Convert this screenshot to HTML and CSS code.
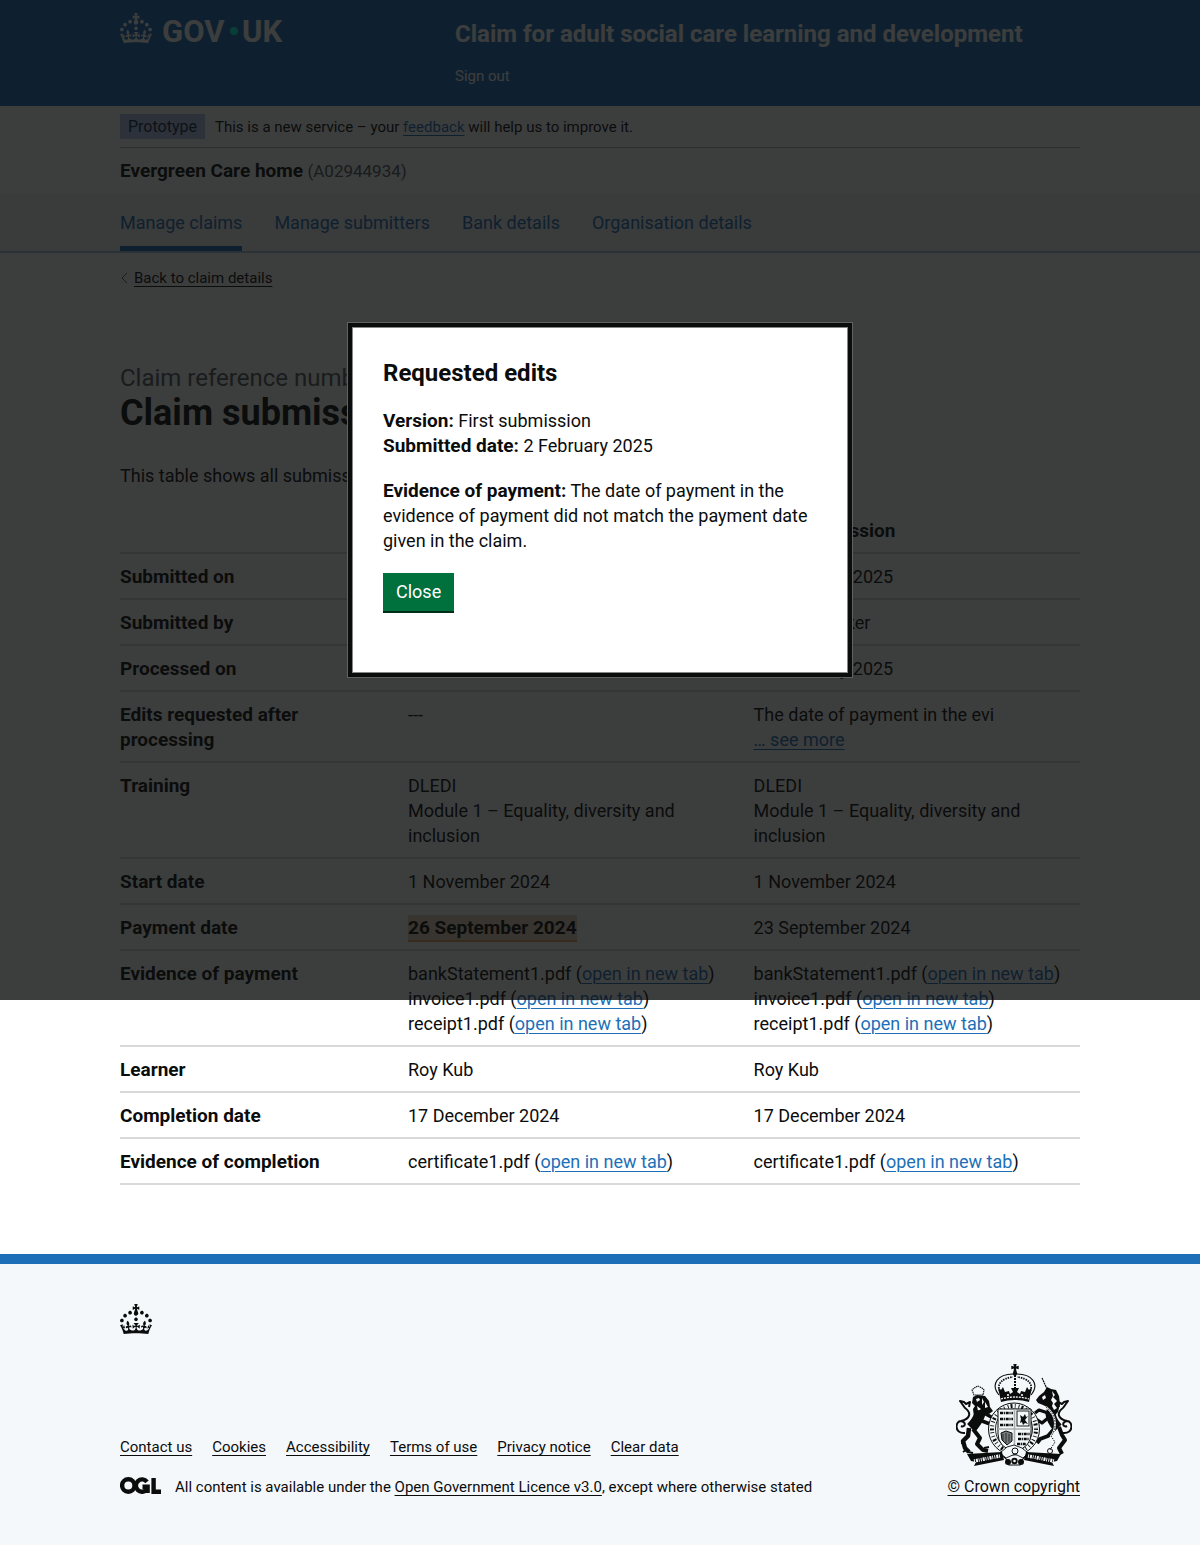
FILE: index.html
```html
<!DOCTYPE html>
<html lang="en">
<head>
<meta charset="utf-8">
<meta name="viewport" content="width=device-width, initial-scale=1">
<title>Claim submissions – Claim for adult social care learning and development</title>
<link rel="stylesheet" href="styles.css">
</head>
<body>
<svg class="sprite" aria-hidden="true">
  <symbol id="crown" viewBox="0 0 32 30">
    <path d="M22.6 10.4c-1 .4-2-.1-2.4-1-.4-.9.1-2 1-2.4.9-.4 2 .1 2.4 1s-.1 2-1 2.4m-5.9 6.7c-.9.4-2-.1-2.4-1-.4-.9.1-2 1-2.4.9-.4 2 .1 2.4 1s-.1 2-1 2.4m10.8-3.7c-1 .4-2-.1-2.4-1-.4-.9.1-2 1-2.4.9-.4 2 .1 2.4 1s0 2-1 2.4m3.3 4.8c-1 .4-2-.1-2.4-1-.4-.9.1-2 1-2.4.9-.4 2 .1 2.4 1s-.1 2-1 2.4M17 4.7l2.3 1.2V2.5l-2.3.7-.2-.2.9-3h-3.4l.9 3-.2.2c-.1.1-2.3-.7-2.3-.7v3.4L15 4.7c.1.1.1.2.2.2l-1.3 4c-.1.2-.1.4-.1.6 0 1.1.8 2 1.9 2.2h.7c1-.2 1.9-1.1 1.9-2.1 0-.2 0-.4-.1-.6l-1.3-4c-.1-.2 0-.2.1-.3m-7.6 5.7c.9.4 2-.1 2.4-1 .4-.9-.1-2-1-2.4-.9-.4-2 .1-2.4 1s0 2 1 2.4m-5 3c.9.4 2-.1 2.4-1 .4-.9-.1-2-1-2.4-.9-.4-2 .1-2.4 1s.1 2 1 2.4m-3.2 4.8c.9.4 2-.1 2.4-1 .4-.9-.1-2-1-2.4-.9-.4-2 .1-2.4 1s0 2 1 2.4m14.8 11c4.4 0 8.6.3 12.3.8 1.1-4.5 2.4-7 3.7-8.8l-2.500-.9c.2 1.300.3 1.900 0 2.700-.4-.4-.8-1.100-1.100-2.300l-1.200 4c.7-.5 1.300-.8 2-.9-1.100 2.500-2.600 3.100-3.500 3-1.100-.2-1.700-1.200-1.500-2.100.3-1.200 1.500-1.500 2.100-.1 1.100-2.300-.8-3-2-2.300 1.900-1.900 2.100-3.500.6-5.600-2.100 1.600-2.100 3.200-1.200 5.500-1.200-1.400-3.200-.6-2.500 1.600.9-1.400 2.100-.5 1.900.8-.2 1.100-1.700 2.100-3.500 1.900-2.700-.2-2.900-2.100-2.900-3.600.7-.1 1.900.5 2.900 1.900l.4-4.300c-1.100 1.100-2.100 1.400-3.200 1.400.4-1.200 2.100-3 2.100-3h-5.400s1.700 1.900 2.100 3c-1.100 0-2.100-.2-3.200-1.400l.4 4.300c1-1.400 2.200-2 2.900-1.900-.1 1.500-.2 3.400-2.900 3.600-1.900.2-3.400-.8-3.500-1.900-.2-1.300 1-2.200 1.900-.8.7-2.300-1.200-3-2.500-1.600.9-2.200.9-3.900-1.200-5.500-1.500 2-1.300 3.700.6 5.600-1.200-.7-3.100 0-2 2.300.6-1.400 1.800-1.100 2.100.1.2.9-.3 1.900-1.500 2.100-.9.2-2.400-.5-3.500-3 .6 0 1.200.3 2 .9l-1.200-4c-.3 1.100-.7 1.900-1.100 2.300-.3-.8-.2-1.400 0-2.700l-2.900.9C1.300 23 2.600 25.500 3.700 30c3.700-.5 7.900-.8 12.300-.8"/>
  </symbol>
</svg>

<header class="header">
  <div class="container header-inner">
    <a class="logo" href="#" aria-label="GOV.UK">
      <svg width="168" height="40" viewBox="0 0 168 40" fill="currentColor" aria-hidden="true">
        <use href="#crown" width="32" height="30"/>
        <text class="logo-text" x="42" y="29">GOV</text>
        <circle class="logo-dot" cx="114" cy="18" r="4"/>
        <text class="logo-text" x="122" y="29">UK</text>
      </svg>
    </a>
    <div class="header-content">
      <a class="service-name" href="#">Claim for adult social care learning and development</a>
      <a class="sign-out" href="#">Sign out</a>
    </div>
  </div>
</header>

<div class="container">
  <div class="phase">
    <strong class="tag">Prototype</strong>
    <span>This is a new service – your <a href="#">feedback</a> will help us to improve it.</span>
  </div>
  <div class="organisation"><strong>Evergreen Care home</strong> <span>(A02944934)</span></div>
</div>

<nav class="service-nav" aria-label="Service">
  <ul class="container">
    <li><a class="active" href="#" aria-current="page">Manage claims</a></li>
    <li><a href="#">Manage submitters</a></li>
    <li><a href="#">Bank details</a></li>
    <li><a href="#">Organisation details</a></li>
  </ul>
</nav>

<div class="container">
  <a class="back" href="#"><svg width="14" height="12" viewBox="0 0 14 12" aria-hidden="true"><path d="M7 1 2 6l5 5" fill="none" stroke="#505a5f" stroke-width="1"/></svg><span>Back to claim details</span></a>
  <main>
    <h1><span class="caption">Claim reference number: VFK-TS1P-A</span>Claim submissions</h1>
    <p>This table shows all submissions of this claim.</p>
    <table>
      <thead>
        <tr><td></td><th scope="col">Second submission</th><th scope="col">First submission</th></tr>
      </thead>
      <tbody>
        <tr><th scope="row">Submitted on</th><td>20 February 2025</td><td>12 February 2025</td></tr>
        <tr><th scope="row">Submitted by</th><td>Simone Parker</td><td>Simone Parker</td></tr>
        <tr><th scope="row">Processed on</th><td>---</td><td>18 February 2025</td></tr>
        <tr><th scope="row">Edits requested after processing</th><td>---</td><td>The date of payment in the evi<br><a href="#">… see more</a></td></tr>
        <tr><th scope="row">Training</th><td>DLEDI<br>Module 1 – Equality, diversity and inclusion</td><td>DLEDI<br>Module 1 – Equality, diversity and inclusion</td></tr>
        <tr><th scope="row">Start date</th><td>1 November 2024</td><td>1 November 2024</td></tr>
        <tr><th scope="row">Payment date</th><td><strong class="changed">26 September 2024</strong></td><td>23 September 2024</td></tr>
        <tr><th scope="row">Evidence of payment</th>
          <td>bankStatement1.pdf (<a href="#">open in new tab</a>)<br>invoice1.pdf (<a href="#">open in new tab</a>)<br>receipt1.pdf (<a href="#">open in new tab</a>)</td>
          <td>bankStatement1.pdf (<a href="#">open in new tab</a>)<br>invoice1.pdf (<a href="#">open in new tab</a>)<br>receipt1.pdf (<a href="#">open in new tab</a>)</td></tr>
        <tr><th scope="row">Learner</th><td>Roy Kub</td><td>Roy Kub</td></tr>
        <tr><th scope="row">Completion date</th><td>17 December 2024</td><td>17 December 2024</td></tr>
        <tr><th scope="row">Evidence of completion</th><td>certificate1.pdf (<a href="#">open in new tab</a>)</td><td>certificate1.pdf (<a href="#">open in new tab</a>)</td></tr>
      </tbody>
    </table>
  </main>
</div>

<footer class="footer">
  <div class="container">
    <svg class="footer-crown" width="32" height="30" fill="#0b0c0c" aria-hidden="true"><use href="#crown"/></svg>
    <div class="footer-meta">
      <div class="footer-text">
        <ul>
          <li><a href="#">Contact us</a></li>
          <li><a href="#">Cookies</a></li>
          <li><a href="#">Accessibility</a></li>
          <li><a href="#">Terms of use</a></li>
          <li><a href="#">Privacy notice</a></li>
          <li><a href="#">Clear data</a></li>
        </ul>
        <div class="licence">
          <svg width="41" height="17" viewBox="0 0 41 17" role="img" aria-label="Open Government Licence" fill="none" stroke="#0b0c0c" stroke-width="4.4">
            <circle cx="8.3" cy="8.5" r="6.2"/>
            <path d="M27 4.8A6.2 6.2 0 1 0 27 12.4M22.5 9.8H27.6V16"/>
            <path d="M33.6 1V14.7H41"/>
          </svg>
          <span>All content is available under the <a href="#">Open Government Licence v3.0</a>, except where otherwise stated</span>
        </div>
      </div>
      <a class="crest" href="#">
        <svg width="116" height="102" viewBox="0 0 116 102" aria-hidden="true" fill="#0b0c0c" stroke="#0b0c0c" stroke-width="0">
          <!-- royal crown -->
          <path d="M57.3 0h3.4l-.7 2.600 2.700-.8v3.400l-2.700-.8.6 3.600h-3.200l.6-3.600-2.700.8V1.800l2.700.8z"/>
          <circle cx="59" cy="9.500" r="2.200"/>
          <g fill="none" stroke-width="1.100">
            <path d="M43 31C34 20 42 10 57 10M75 31c9-11 1-21-14-21"/>
            <path stroke-dasharray="1.500 1" stroke-width="1.800" d="M45 29c-6-8 1-15 12-16M73 29c6-8-1-15-12-16"/>
            <path stroke-dasharray="2 1" stroke-width="2" d="M59 11v13"/>
          </g>
          <path d="M42 23l3 3 2-3 2 5 4-1 1 3 3-2-2-4h8l-2 4 3 2 1-3 4 1 2-5 2 3 3-3-3 15q-15-4-28 0z"/>
          <path d="M45 35q14-4 28 0" fill="none" stroke="#f4f8fb" stroke-width="1.300" stroke-dasharray="2 1"/>
          <circle cx="52" cy="31" r="1.100" fill="#f4f8fb"/><circle cx="66" cy="31" r="1.100" fill="#f4f8fb"/>
          <!-- lion supporter -->
          <path d="M18 31l-2-5 2-2 4-2 4 2 2 2-1 5z" fill="none" stroke-width="1.100" stroke-dasharray="1.500 .6"/>
          <path d="M17 33l4-2 8 1 4 5 1 6 3 4-4 3-5-1-5 6-5-2-1-8 2-3-3-3z"/>
          <path d="M20 35l3-1 1 2-3 2zM26 34l2 4-2 3M29 38l3 5-3 1M21 42l4 3-3 2z" fill="#f4f8fb"/>
          <g fill="none" stroke-linejoin="round">
            <path d="M25 47q-3 10-10 17" stroke-width="11"/>
            <path d="M28 49l9 5 3-2M26 57l8 3 4-1" stroke-width="3.500"/>
            <path d="M13 64l-1 8-5 5 2 7 4 4" stroke-width="4.500"/>
            <path d="M17 65l7 9-3 6 6 6 5 1" stroke-width="4"/>
            <path d="M8 79H5M10 86l-3 2M28 84l5-1M12 88l5 1" stroke-width="1.800"/>
            <path d="M9 69C-2 70-1 57 5 57c6 1 4 7 0 5M5 57c9-2 11-8 4-13M9 44l-5-7 4 1 2 2 4-2-1 5" stroke-width="2"/>
          </g>
          <!-- unicorn supporter -->
          <path d="M86 14l5 11" fill="none" stroke-width="1.200" stroke-dasharray="2 .6"/>
          <path d="M82 39l-2-3 3-4 5-4 3-5 4 2 5 1 3 6 1 8-2 8-5 5-7-2 1-8-4-2z"/>
          <path d="M86 33l3-2 1 3-3 2zM96 27l3 4-2 2 4 4-3 3 3 4-3 2-2-4 1-3-2-3 2-4z" fill="#f4f8fb"/>
          <g fill="none" stroke-linejoin="round">
            <path d="M94 47q1 10 8 17" stroke-width="10"/>
            <path d="M92 49l-9-3-4 3M92 54l-6 5-6-4" stroke-width="3.200"/>
            <path d="M103 63l3 8 3 5-6 8 3 6" stroke-width="4"/>
            <path d="M99 64l-7 8-8 3-3 4" stroke-width="4"/>
            <path d="M90 43q9 7 9 16t-4 13l4 6-5 8" stroke="#f4f8fb" stroke-width="2"/>
            <path d="M90 43q9 7 9 16t-4 13l4 6-5 8" stroke-width="1" stroke-dasharray="1.500 1.200"/>
            <circle cx="94" cy="87" r="2.500" stroke-width="1"/>
            <path d="M107 69c11 1 10-12 4-12-6 1-4 7 0 5M111 57c-9-2-11-8-4-13M107 44l5-7-4 1-2 2-4-2 1 5" stroke-width="2"/>
          </g>
          <!-- garter and shield -->
          <ellipse cx="58" cy="65" rx="25.500" ry="26" fill="#f4f8fb" stroke-width="1"/>
          <ellipse cx="58" cy="65" rx="18.500" ry="20" fill="#f4f8fb" stroke-width=".9"/>
          <ellipse cx="58" cy="65" rx="22" ry="23" fill="none" stroke-width="4" stroke-dasharray=".9 1.900 2 2.400 .8 3"/>
          <path d="M42 45h33v25q0 13-16.500 18Q42 83 42 70z" fill="#f4f8fb" stroke-width="1"/>
          <path d="M58.500 45v43M42 65h33" fill="none" stroke="#a9adae" stroke-width="1.600"/>
          <g fill="none" stroke-width="2.400" stroke-dasharray="3 .7 1.200 .8">
            <path d="M44 49h13M44 55h13M44 61h13M62 70h12M62 75h11M61 80h9"/>
          </g>
          <rect x="61" y="47" width="12" height="15" fill="none" stroke-width=".9"/>
          <path d="M64 51l3 2 2-3 1 3 2-1-3 4 3 4-3-1-2 2-1-3-2 1 1-4z"/>
          <path d="M45 69l5-2 6 2v8l-5 4-5-5z" fill="#777b7c" stroke-width="1"/>
          <path d="M47 70v7M50 69v10M53 70v8" fill="none" stroke-width=".7"/>
          <path d="M51 83l7-2 8 3 6 5-5 5-8-4-9 4-6-5z" fill="#f4f8fb" stroke-width=".9"/>
          <circle cx="59" cy="87" r="3" fill="none" stroke-width="1"/>
          <!-- motto scroll -->
          <path d="M11 90l35-2 2 8-30 6 2-4-5-1zM105 90l-35-2-2 8 30 6-2-4 5-1z"/>
          <path d="M18 97l26-5M72 92l26 5" fill="none" stroke="#f4f8fb" stroke-width="3.500" stroke-dasharray="1 1 2 .8 .9 1.200"/>
          <path d="M46 92q5 2 7 9h11q2-7 7-9" fill="none" stroke-width="1.100"/>
          <circle cx="52" cy="98" r="3"/><circle cx="65" cy="98" r="3"/><circle cx="58.500" cy="97" r="3.200"/>
          <circle cx="58.500" cy="97" r="1.300" fill="#f4f8fb"/>
        </svg>
        <span>© Crown copyright</span>
      </a>
    </div>
  </div>
</footer>

<div class="overlay">
  <dialog open aria-labelledby="edits-title">
    <h2 id="edits-title">Requested edits</h2>
    <p><strong>Version:</strong> First submission<br><strong>Submitted date:</strong> 2 February 2025</p>
    <p><strong>Evidence of payment:</strong> The date of payment in the evidence of payment did not match the payment date given in the claim.</p>
    <button type="button">Close</button>
  </dialog>
</div>
</body>
</html>
```
FILE: styles.css
```css
* {
  box-sizing: border-box;
}

body {
  position: relative;
  margin: 0;
  background: #fff;
  color: #0b0c0c;
  font-family: Roboto, "Liberation Sans", sans-serif;
  font-size: 18px;
  line-height: 25px;
}

a {
  color: #1d70b8;
  text-decoration-thickness: 1px;
  text-underline-offset: 3px;
}

strong,
th {
  font-size: 19px;
  font-weight: 700;
}

ul {
  margin: 0;
  padding: 0;
  list-style: none;
}

.sprite {
  display: none;
}

.container {
  max-width: 960px;
  margin: 0 auto;
}

/* Header */

.header {
  background: #1d70b8;
  color: #fff;
}

.header a {
  color: #fff;
  text-decoration: none;
}

.header-inner {
  display: grid;
  grid-template-columns: 335px 1fr;
  padding: 13px 0 20px;
}

.logo svg {
  display: block;
}

.logo-text {
  font-size: 31px;
  font-weight: 700;
}

.logo-dot {
  fill: #00ffe0;
}

.header-content {
  display: flex;
  flex-direction: column;
  align-items: flex-start;
  gap: 17px;
  padding-top: 6px;
}

.service-name {
  font-size: 24px;
  font-weight: 700;
  line-height: 30px;
}

.sign-out {
  font-size: 15px;
  line-height: 20px;
}

/* Phase banner */

.phase {
  display: flex;
  align-items: baseline;
  gap: 10px;
  padding: 8px 0 7px;
  border-bottom: 1px solid #b1b4b6;
  font-size: 15px;
}

.tag {
  padding: 0 8px;
  background: #bbd4ea;
  color: #0c2d4a;
  font-size: 16px;
  font-weight: 400;
}

.phase .tag {
  background: #b4c3ea;
}

.organisation {
  padding: 10px 0;
}

.organisation span {
  color: #505a5f;
  font-size: 17px;
}

/* Service navigation */

.service-nav {
  border-bottom: 2px solid #a5c6e3;
  background: #f4f4f4;
}

.service-nav ul {
  display: flex;
  gap: 32px;
}

.service-nav a {
  display: block;
  padding: 16px 0 11px;
  border-bottom: 5px solid transparent;
  text-decoration: none;
}

.service-nav .active {
  border-color: #1d70b8;
}

/* Main content */

.back {
  display: inline-flex;
  align-items: center;
  margin-top: 15px;
  color: #0b0c0c;
  font-size: 15px;
  line-height: 20px;
  text-decoration: none;
}

.back span {
  text-decoration: underline 1px;
  text-underline-offset: 3px;
}

main {
  padding: 73px 0 69px;
}

h1 {
  margin: 0 0 30px;
  font-size: 36px;
  line-height: 40px;
}

.caption {
  display: block;
  color: #505a5f;
  font-size: 24px;
  font-weight: 400;
  line-height: 30px;
}

p {
  margin: 0 0 20px;
}

table {
  width: 100%;
  border-collapse: separate;
  border-spacing: 0;
  table-layout: fixed;
}

th,
td {
  padding: 10px 20px 9px 0;
  border-bottom: 2px solid #d8d9da;
  text-align: left;
  vertical-align: top;
}

thead td {
  width: 30%;
}

thead th {
  width: 36%;
}

thead th:last-child {
  width: 34%;
}

td:last-child {
  padding-right: 0;
}

.changed {
  padding: 1px 0;
  border-bottom: 2px solid #f0a35a;
  background: #eccfb8;
}

/* Footer */

.footer {
  padding: 40px 0 49px;
  border-top: 10px solid #1d70b8;
  background: #f4f8fb;
  font-size: 15px;
  line-height: 20px;
}

.footer a {
  color: #0b0c0c;
}

.footer-crown {
  display: block;
  margin-bottom: 30px;
}

.footer-meta {
  display: flex;
  align-items: flex-end;
  justify-content: space-between;
}

.footer-text {
  display: flex;
  flex-direction: column;
  gap: 20px;
}

.footer-text ul {
  display: flex;
  gap: 20px;
}

.licence {
  display: flex;
  gap: 14px;
}

.footer .crest {
  display: flex;
  flex-direction: column;
  align-items: center;
  gap: 11px;
  font-size: 16px;
}

/* Modal */

.overlay {
  position: absolute;
  inset: 0 0 auto;
  display: grid;
  place-items: center;
  height: 1000px;
  background: rgba(11, 12, 12, 0.8);
}

dialog {
  position: static;
  width: 504px;
  max-width: 100%;
  margin: 0;
  padding: 31px 27px 60px 31px;
  border: 4px solid #0b0c0c;
  outline: 1px solid #606161;
  background: #fff;
  box-shadow: inset 0 0 0 1px #858686;
  color: #0b0c0c;
}

h2 {
  margin: 0 0 20px;
  font-size: 24px;
  line-height: 30px;
}

button {
  display: block;
  margin: 0 0 2px;
  padding: 6px 13px 7px;
  border: 0;
  background: #00703c;
  box-shadow: 0 2px 0 #002d18;
  color: #fff;
  font: inherit;
}
```
